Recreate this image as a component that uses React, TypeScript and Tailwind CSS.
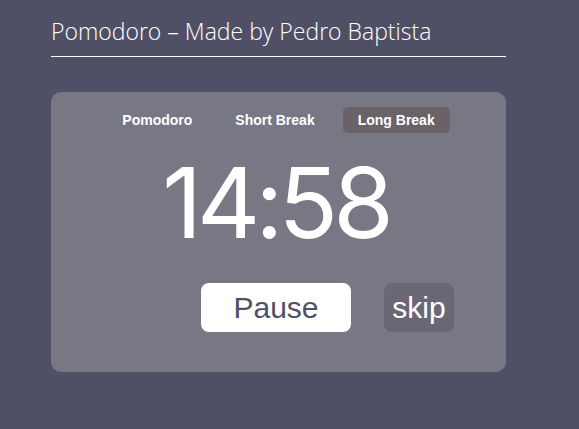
import React, { useState } from "react";

const TABS = ["Pomodoro", "Short Break", "Long Break"];

function App() {
  const [active, setActive] = useState("Long Break");

  return (
    <div className="min-h-[429px] w-full bg-[#4f5066] pt-[16px] font-['Inter',sans-serif]">
      <div className="ml-[51px] w-[455px]">
        <header className="border-b border-white pb-[9px]">
          <h1 className="font-['Open_Sans',sans-serif] text-[23px] font-light leading-[31px] text-white">
            Pomodoro – Made by Pedro Baptista
          </h1>
        </header>

        <div className="mt-[35px] flex flex-col items-center rounded-[10px] bg-[#787885] pt-[15px] pb-[40px]">
          <div className="flex gap-[13px]">
            {TABS.map((t) => (
              <button
                key={t}
                onClick={() => setActive(t)}
                className={
                  "h-[26px] rounded-[5px] px-[15px] font-['Liberation_Sans',sans-serif] text-[14px] font-bold text-white " +
                  (active === t ? "bg-[#6b6269]" : "bg-transparent")
                }
              >
                {t}
              </button>
            ))}
          </div>

          <div className="mt-[15px] pr-[6px] text-[98px] leading-[110px] tracking-[-5px] text-white">
            14:58
          </div>

          <div className="mt-[25px] grid w-full grid-cols-[1fr_auto_1fr] items-center pr-[5px]">
            <div />
            <button className="h-[49px] w-[150px] rounded-[8px] bg-white font-['Liberation_Sans',sans-serif] text-[30px] text-[#4f5066]">
              Pause
            </button>
            <div>
              <button className="ml-[33px] h-[49px] w-[70px] rounded-[8px] bg-[#6a6774] font-['Liberation_Sans',sans-serif] text-[30px] text-white">
                skip
              </button>
            </div>
          </div>
        </div>
      </div>
    </div>
  );
}

export default App;
